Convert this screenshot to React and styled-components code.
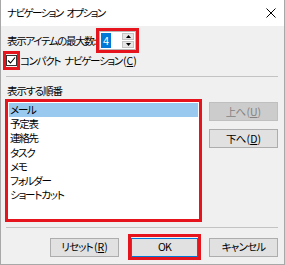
import React from 'react';
import styled, { createGlobalStyle } from 'styled-components';

const Global = createGlobalStyle`
  html, body {
    margin: 0;
    padding: 0;
    background: #fff;
  }
  body {
    font-family: "Noto Sans CJK JP", "Noto Sans", sans-serif;
    font-size: 10.5px;
    letter-spacing: -1px;
    color: #000;
    font-feature-settings: "palt" 1;
  }
  *, *:before, *:after {
    box-sizing: border-box;
  }
`;

const Dialog = styled.div`
  width: 285px;
  height: 265px;
  background: #f0f0f0;
  border: 1px solid #a8a8a8;
  border-top: none;
  display: flex;
  flex-direction: column;
`;

const TitleBar = styled.div`
  height: 26px;
  background: #fff;
  display: flex;
  align-items: center;
  justify-content: space-between;
  padding: 0 8px 0 6px;
  line-height: 14px;
  letter-spacing: -1.6px;
  word-spacing: 3px;
`;

const Body = styled.div`
  display: flex;
  flex-direction: column;
  padding: 0 6px;
  line-height: 14px;
`;

const Highlight = styled.div`
  border: 3px solid #e5141d;
  display: flex;
  align-items: center;
  justify-content: center;
  flex: none;
  width: ${(p) => p.$w}px;
  height: ${(p) => p.$h}px;
`;

const CountRow = styled.div`
  display: flex;
  align-items: center;
  margin-top: 2px;
`;

const CountLabel = styled.span`
  width: 89px;
  white-space: nowrap;
  letter-spacing: -1.35px;
`;

const Spinner = styled.div`
  width: 37px;
  height: 19px;
  background: #fff;
  border: 1px solid #b8b8b8;
  display: flex;
  align-items: center;
  padding-left: 1px;
`;

const Selected = styled.span`
  background: #0078d7;
  color: #fff;
  padding: 0 2px;
  line-height: 15px;
  font-size: 11px;
  letter-spacing: 0;
`;

const SpinButtons = styled.div`
  margin-left: auto;
  margin-right: 1px;
  display: flex;
  flex-direction: column;
  gap: 1px;
`;

const SpinButton = styled.div`
  width: 12px;
  height: 7px;
  background: #e6e6e6;
  border: 1px solid #c4c4c4;
  display: flex;
  align-items: center;
  justify-content: center;
`;

const CheckRow = styled.div`
  display: flex;
  align-items: center;
  margin-top: -2px;
  margin-left: -4px;
`;

const CheckLabel = styled.span`
  white-space: nowrap;
  letter-spacing: -1.3px;
  word-spacing: 3px;
`;

const CheckBox = styled.div`
  width: 11px;
  height: 11px;
  background: #fff;
  border: 1px solid #333;
  display: flex;
  align-items: center;
  justify-content: center;
`;

const Separator = styled.div`
  height: 1px;
  background: #c3c3c3;
  margin-top: ${(p) => p.$top}px;
  margin-left: -1px;
`;

const SectionLabel = styled.div`
  margin-top: 7px;
`;

const ListRow = styled.div`
  display: flex;
  gap: 7px;
  margin-top: 1px;
  margin-left: -2px;
`;

const ListBox = styled.div`
  width: 100%;
  height: 100%;
  background: #fff;
  padding: 1px;
  align-self: stretch;
`;

const Item = styled.div`
  height: 14.2px;
  line-height: 14.2px;
  padding-left: 1px;
  letter-spacing: -1.2px;
  background: ${(p) => (p.$active ? '#99c9ef' : 'transparent')};
  white-space: nowrap;
`;

const SideButtons = styled.div`
  display: flex;
  flex-direction: column;
  gap: 8px;
  margin-top: 3px;
`;

const Button = styled.button`
  width: ${(p) => p.$w || 69}px;
  height: 19px;
  padding: 0;
  font: inherit;
  letter-spacing: -0.8px;
  line-height: 14px;
  background: ${(p) => (p.disabled ? '#cccccc' : '#e1e1e1')};
  color: ${(p) => (p.disabled ? '#838383' : '#000')};
  border: 1px solid ${(p) => (p.disabled ? '#bfbfbf' : p.$default ? '#0078d7' : '#adadad')};
  display: flex;
  align-items: center;
  justify-content: center;
`;

const Footer = styled.div`
  display: flex;
  justify-content: flex-end;
  align-items: center;
  margin-top: 6px;
  gap: 8px;
`;

const MnemonicWrap = styled.span`
  letter-spacing: 0;
  margin-left: 1px;
`;

const Key = styled.span`
  text-decoration: underline;
  text-underline-offset: 1px;
`;

const Mnemonic = ({ k }) => (
  <MnemonicWrap>
    (<Key>{k}</Key>)
  </MnemonicWrap>
);

const CloseIcon = () => (
  <svg width="10" height="10" viewBox="0 0 10 10">
    <path d="M0.5 0.5 L9.5 9.5 M9.5 0.5 L0.5 9.5" stroke="#000" strokeWidth="1" fill="none" />
  </svg>
);

const Arrow = ({ down }) => (
  <svg width="5" height="3" viewBox="0 0 5 3">
    <path d={down ? 'M0 0 H5 L2.5 3 Z' : 'M0 3 H5 L2.5 0 Z'} fill="#000" />
  </svg>
);

const items = ['メール', '予定表', '連絡先', 'タスク', 'メモ', 'フォルダー', 'ショートカット'];

export default function App() {
  return (
    <>
      <Global />
      <Dialog>
        <TitleBar>
          <span>ナビゲーション オプション</span>
          <CloseIcon />
        </TitleBar>
        <Body>
          <CountRow>
            <CountLabel>表示アイテムの最大数:</CountLabel>
            <Highlight $w={43} $h={25}>
              <Spinner>
                <Selected>4</Selected>
                <SpinButtons>
                  <SpinButton>
                    <Arrow />
                  </SpinButton>
                  <SpinButton>
                    <Arrow down />
                  </SpinButton>
                </SpinButtons>
              </Spinner>
            </Highlight>
          </CountRow>
          <CheckRow>
            <Highlight $w={17} $h={19}>
              <CheckBox>
                <svg width="9" height="9" viewBox="0 0 9 9">
                  <path d="M1 4.5 L3.5 7 L8 1.5" stroke="#000" strokeWidth="1.1" fill="none" />
                </svg>
              </CheckBox>
            </Highlight>
            <CheckLabel>
              コンパクト ナビゲーション<Mnemonic k="C" />
            </CheckLabel>
          </CheckRow>
          <Separator $top={6} />
          <SectionLabel>表示する順番</SectionLabel>
          <ListRow>
            <Highlight $w={197} $h={123}>
              <ListBox>
                {items.map((it, i) => (
                  <Item key={it} $active={i === 0}>
                    {it}
                  </Item>
                ))}
              </ListBox>
            </Highlight>
            <SideButtons>
              <Button disabled>
                上へ<Mnemonic k="U" />
              </Button>
              <Button>
                下へ<Mnemonic k="D" />
              </Button>
            </SideButtons>
          </ListRow>
          <Separator $top={5} />
          <Footer>
            <Button style={{ marginRight: 1 }}>
              リセット<Mnemonic k="R" />
            </Button>
            <Highlight $w={73} $h={26}>
              <Button $w={67} $default>
                OK
              </Button>
            </Highlight>
            <Button>キャンセル</Button>
          </Footer>
        </Body>
      </Dialog>
    </>
  );
}
